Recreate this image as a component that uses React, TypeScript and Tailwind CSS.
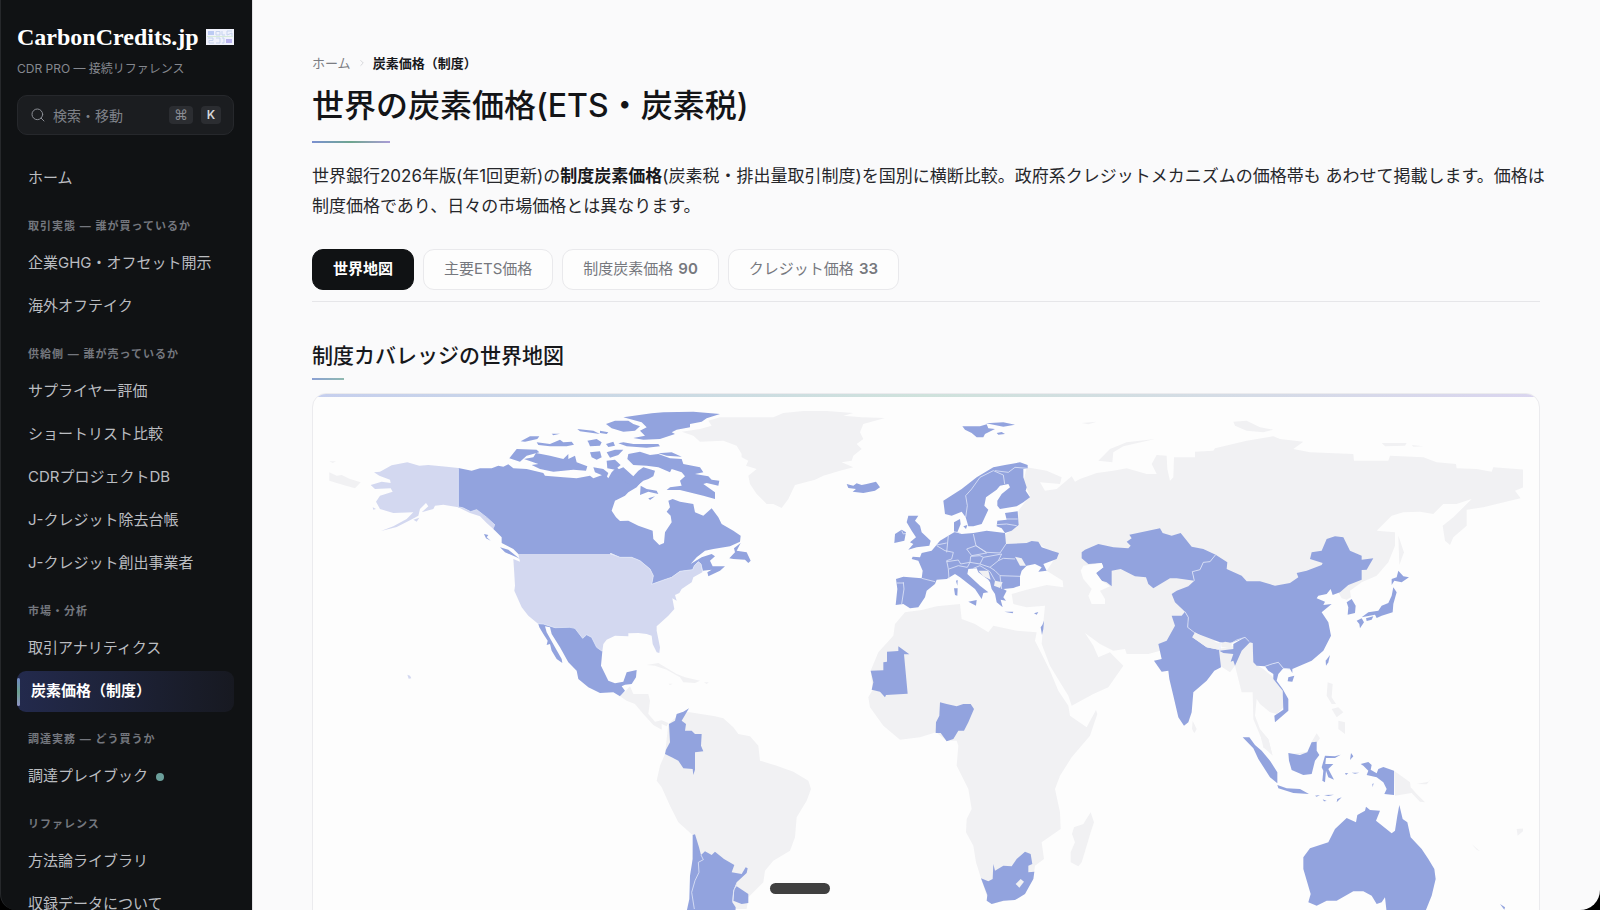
import { ChevronRight, Search } from 'lucide-react'

type NavItem = { label: string; active?: boolean; dot?: boolean }
type NavGroup = { title?: string; items: NavItem[] }

const NAV: NavGroup[] = [
  { items: [{ label: 'ホーム' }] },
  {
    title: '取引実態 — 誰が買っているか',
    items: [{ label: '企業GHG・オフセット開示' }, { label: '海外オフテイク' }],
  },
  {
    title: '供給側 — 誰が売っているか',
    items: [
      { label: 'サプライヤー評価' },
      { label: 'ショートリスト比較' },
      { label: 'CDRプロジェクトDB' },
      { label: 'J-クレジット除去台帳' },
      { label: 'J-クレジット創出事業者' },
    ],
  },
  {
    title: '市場・分析',
    items: [{ label: '取引アナリティクス' }, { label: '炭素価格（制度）', active: true }],
  },
  { title: '調達実務 — どう買うか', items: [{ label: '調達プレイブック', dot: true }] },
  {
    title: 'リファレンス',
    items: [{ label: '方法論ライブラリ' }, { label: '収録データについて' }],
  },
]

const TABS: { label: string; count?: number }[] = [
  { label: '世界地図' },
  { label: '主要ETS価格' },
  { label: '制度炭素価格', count: 90 },
  { label: 'クレジット価格', count: 33 },
]

// Map regions. Every region has its own origin and is drawn at a third of its size.
type Region = {
  x: number
  y: number
  none?: string[]
  partial?: string[]
  covered?: string[]
  enclaves?: string[]
  borders?: string
}

const REGIONS: Region[] = [
  // Eurasia base
  {
    x: 880,
    y: 390,
    none: [
      '440,235 500,245 545,265 540,285 480,280 495,305 530,300 575,262 585,278 600,270 650,252 700,245 740,238 800,255 830,255 815,225 830,198 860,200 862,240 870,275 880,265 882,205 945,205 945,188 1000,185 1005,178 1100,155 1180,142 1200,150 1270,158 1240,180 1290,190 1420,195 1422,215 1525,215 1530,200 1630,205 1670,220 1728,225 1730,238 1790,240 1835,248 1840,235 1932,242 1930,295 1905,305 1922,328 1890,335 1810,355 1760,362 1760,410 1720,445 1710,468 1695,455 1688,410 1720,385 1775,330 1730,345 1690,345 1660,375 1620,368 1570,370 1535,380 1490,425 1545,430 1545,470 1525,520 1490,560 1445,580 1410,605 1413,625 1400,632 1385,628 1370,600 1300,560 1000,760 860,780 805,795 740,795 735,780 700,785 660,765 615,732 640,770 655,805 690,790 700,800 730,830 685,895 640,915 575,950 565,920 540,880 510,830 485,765 490,700 495,650 440,655 400,645 395,615 440,602 500,588 550,595 548,575 500,545 530,500 470,460 380,470 370,440 415,410 415,365 450,320 430,280',
      '1115,760 1125,825 1150,840 1180,865 1205,900 1215,950 1190,975 1170,970 1140,945 1130,930 1125,980 1140,1020 1165,1050 1178,1100 1155,1075 1120,990 1118,910 1085,910 1065,830 1050,850 1020,830 1015,780',
      '655,215 690,180 740,160 825,150 730,172 700,190 697,220',
      '605,102 650,98 625,106',
      '1060,98 1100,95 1140,115 1180,122 1150,130 1100,125 1065,110',
      '1505,162 1580,162 1575,170 1515,172',
      '1595,168 1630,172 1600,173',
      '1555,440 1572,490 1558,528',
    ],
  },
  // Africa
  {
    x: 850,
    y: 600,
    none: [
      '175,38 215,33 260,22 330,15 335,60 375,75 415,100 430,80 500,95 560,100 555,125 575,165 600,215 625,275 655,320 660,350 710,385 738,333 742,345 720,410 665,475 630,530 615,570 630,640 632,690 575,730 582,780 555,800 550,840 510,895 425,915 410,890 393,838 378,790 370,740 348,700 350,660 365,630 355,570 320,500 325,440 320,425 290,425 258,400 210,415 150,422 100,380 60,325 55,295 68,272 62,215 85,160 130,110 135,75 165,40',
      '722,640 732,670 722,700 710,740 695,790 685,802 662,790 662,760 675,730 666,705 672,685 700,675',
    ],
    covered: [
      '145,142 178,166 162,166 173,284 108,288 105,295 90,278 65,272 70,250 62,215 100,214 100,190 111,188 111,158 145,156',
      '270,310 290,315 320,322 340,315 362,315 372,330 355,370 342,395 325,395 310,420 290,427 272,402 257,402 258,370 268,350',
      '430,795 435,815 460,800 485,802 500,780 525,758 542,765 547,795 535,800 535,820 553,818 550,840 525,885 495,903 460,905 425,915 410,905 412,888 393,838 415,847 428,840',
    ],
    enclaves: ['497,855 512,840 522,848 508,866'],
  },
  // North America, western half
  {
    x: 300,
    y: 320,
    none: ['88,460 110,470 125,468 150,480 182,490 165,508 130,498 88,485', '88,427 108,427 98,432'],
    partial: [
      '475,447 440,443 385,438 358,440 322,430 275,439 240,458 222,460 238,470 270,482 272,492 245,488 212,498 225,510 272,508 278,518 240,530 228,548 240,570 280,582 340,580 320,600 280,622 243,636 290,624 330,604 355,590 360,570 378,552 385,562 365,580 400,570 405,560 430,557 475,565 510,582 540,592 560,612 580,630 585,618 560,595 530,572 512,578 488,566 475,563',
      '340,602 358,596 350,608',
      '218,565 228,570 220,572',
      '322,1067 330,1070 334,1078 326,1079',
    ],
    covered: [
      '475,447 515,455 540,448 575,448 595,440 610,443 625,436 640,448 680,450 730,462 735,470 790,475 830,478 870,470 880,478 915,465 925,478 935,460 950,445 970,462 1000,475 1025,487 1010,505 985,520 975,530 945,545 935,575 948,595 960,606 985,605 1015,620 1058,635 1060,660 1078,678 1092,672 1095,640 1115,610 1112,590 1100,578 1110,565 1105,545 1118,540 1140,548 1180,555 1185,580 1210,590 1235,568 1255,595 1265,615 1300,635 1322,650 1320,668 1290,682 1240,690 1215,695 1190,715 1172,735 1205,715 1235,705 1245,712 1230,725 1238,742 1275,742 1260,755 1225,772 1222,760 1235,752 1208,755 1203,735 1195,728 1183,740 1178,752 1140,757 1115,775 1085,785 1055,796 1060,770 1050,750 1020,725 995,715 960,715 932,702 930,705 655,705 640,690 605,672 605,655 590,640 580,630 585,618 565,600 530,572 512,578 488,566 475,565',
      '552,645 565,648 560,655 572,665 558,658',
    ],
    borders: 'M475 448V564L488 566L512 578L530 572L560 595L585 618',
  },
  // North America, eastern half
  {
    x: 500,
    y: 390,
    none: [
      '545,128 600,120 635,110 625,95 660,85 820,85 850,72 940,63 1060,72 1030,80 1085,85 1155,87 1090,105 1080,130 1090,150 1070,165 1085,180 1060,200 1055,215 1025,220 1060,235 1020,245 970,260 945,272 885,288 865,330 845,357 820,345 800,345 770,315 750,285 745,260 770,240 738,230 745,215 725,205 725,195 710,170 670,155 600,158 580,140',
    ],
    partial: [
      '55,495 330,495 360,505 395,505 420,515 450,540 460,560 455,586 485,575 515,565 540,547 578,542 583,530 595,518 603,525 607,550 580,565 575,580 545,600 538,612 525,618 530,635 517,628 523,660 505,680 470,712 470,725 480,775 478,792 470,790 458,765 455,740 440,735 415,732 385,733 385,742 345,740 320,752 310,765 307,787 290,775 275,745 260,737 248,748 225,718 210,716 165,716 130,705 115,705 85,680 65,655 43,605 45,590 42,540 40,510 60,518',
    ],
    covered: [
      '115,705 130,705 165,716 210,714 225,718 248,748 260,737 275,745 290,775 307,787 303,830 325,875 345,883 370,878 380,850 410,843 408,865 395,885 375,887 365,892 375,905 360,922 340,910 300,912 265,895 235,870 230,845 205,820 180,775 155,735 150,715 135,712 140,730 165,775 185,810 187,822 170,810 155,785 150,765 140,768 143,755 130,735 118,715',
      '370,85 455,73 490,70 580,68 660,75 620,88 605,98 570,105 570,115 530,122 515,130 525,135 480,150 430,152 400,147 435,140 420,125 440,115 425,100',
      '318,105 345,95 385,95 400,105 420,112 405,125 370,128 335,118',
      '355,163 370,160 400,165 475,165 480,172 440,176 380,172',
      '232,120 280,125 300,135 240,127',
      '155,134 180,134 160,139',
      '300,125 325,130 320,135 300,132',
      '262,155 290,150 305,160 300,170 270,172 265,160',
      '318,165 340,158 345,170 325,174',
      '62,157 90,142 118,142 112,150 75,158',
      '110,160 150,165 180,152 190,160 215,158 222,167 200,172 150,172 115,168',
      '28,208 50,180 110,182 118,190 80,200 60,218',
      '72,210 100,205 108,192 150,200 190,210 205,195 205,210 225,200 230,220 262,232 258,245 220,242 160,248 120,240 95,228 115,225',
      '270,190 300,187 305,205 290,212 275,205',
      '320,190 345,182 370,182 355,198 330,206',
      '320,215 345,212 362,228 345,242 322,238',
      '280,235 310,240 325,252 320,265 285,250',
      '385,195 420,188 450,198 475,195 510,208 545,210 550,225 600,235 610,250 585,255 625,262 635,272 658,275 655,290 620,282 610,285 645,310 645,330 610,320 540,303 500,303 510,295 545,290 540,275 555,262 545,250 515,240 510,250 475,235 440,230 400,228 382,210',
      '345,245 370,235 400,262 415,245 430,235 465,245 460,262 445,270 430,275 412,290 385,285 350,260',
      '475,193 515,190 545,203 500,200',
      '422,290 440,300 470,305 475,315 445,308 420,318',
      '445,328 465,322 450,333',
      '722,462 710,485 740,490 752,515 745,522 735,512 700,510 688,508 705,490 702,478',
      '0,475 25,482 60,510 50,505 15,490',
      '1040,285 1060,290 1070,283 1085,288 1100,285 1128,278 1140,295 1125,305 1090,312 1058,308 1068,300 1045,297',
    ],
    borders:
      'M330 493L360 505L395 505L420 515L450 540L460 560L455 586L485 575L515 565L540 547L578 542L583 530L595 518L603 525L608 548M115 704L130 705L165 716L210 715L225 718L248 748L260 737L275 745L290 775L307 787',
  },
  // Central and South America
  {
    x: 600,
    y: 600,
    none: [
      '60,292 75,278 90,262 100,285 145,285 150,305 145,345 165,368 185,364 205,372 200,382 185,375 185,392 160,378 130,345 105,315 80,305',
      '140,198 175,192 230,225 255,235 300,245 285,252 250,250 240,235 200,212 165,200',
      '205,375 245,340 270,340 345,352 370,358 400,385 415,405 450,412 475,440 480,485 530,500 580,518 625,545 633,570 620,605 590,655 585,715 570,755 520,785 495,815 490,850 445,895 440,930 270,930 280,710 235,670 210,620 185,565 170,545 180,500 195,465',
      '205,254 218,254 210,258',
      '312,250 326,250 320,255',
    ],
    covered: [
      '267,328 245,365 258,375 255,395 275,395 285,405 305,405 303,440 310,457 285,460 285,512 280,528 278,510 250,508 235,485 215,475 195,465 198,452 210,430 207,375 225,365 230,345 250,338',
      '278,708 285,706 297,745 303,768 315,757 335,768 345,758 372,780 403,798 395,820 425,825 437,805 443,808 440,822 410,850 400,875 397,910 407,925 405,960 255,960 268,900 270,830 278,780',
      '410,862 445,885 445,912 425,915 400,905 403,870',
    ],
    borders: 'M303 768L310 782L295 790L297 820L285 845L275 880L283 930M410 855L401 875L398 908',
  },
  // Europe
  {
    x: 880,
    y: 390,
    covered: [
      '247,112 300,112 320,106 325,118 345,120 315,135 310,145 290,145 275,132 255,122',
      '318,103 370,100 405,107 370,113',
      '350,132 365,129 375,135 355,137',
      '420,220 443,228 443,238 430,240 430,265 440,295 437,305 450,325 430,340 410,352 360,360 352,350 352,335 365,315 390,295 385,285 360,290 350,302 318,325 313,350 325,362 305,405 280,412 265,412 257,385 245,368 215,380 195,375 190,335 245,300 290,265 340,235 375,228',
      '375,372 413,367 416,408 395,425 375,432 365,418 350,412 352,395 380,392',
      '85,380 115,380 105,395 120,410 125,430 152,455 148,470 110,475 85,482 100,465 90,460 108,445 95,425 80,400',
      '45,435 65,422 78,430 73,455 43,462',
      '222,400 240,390 242,405 232,430 222,428',
      '250,412 262,408 258,420',
      '98,503 120,505 125,492 155,485 180,455 205,440 225,428 245,435 280,432 320,425 375,432 378,465 440,462 455,456 475,458 485,475 515,485 537,492 530,510 490,525 500,545 475,548 485,535 465,525 440,530 425,545 420,562 420,590 400,597 370,600 380,605 370,625 378,635 362,632 368,655 350,640 345,615 335,600 330,580 325,572 295,550 290,538 265,540 262,555 300,590 325,610 310,612 305,630 285,600 240,565 225,555 200,570 170,572 165,585 140,605 135,625 115,655 90,658 70,645 47,648 52,600 48,570 70,563 125,568 128,545 115,515 95,510',
      '265,638 290,633 288,650',
      '222,598 233,598 232,620 225,618',
      '228,575 233,573 232,590',
      '373,668 400,668 398,673',
      '462,673 475,669 470,677',
      '487,708 492,695 490,720 486,738 482,715',
    ],
    enclaves: ['295,545 325,545 332,572 310,562', '345,575 368,580 360,597 342,590', '405,503 425,508 438,530 420,530'],
    borders:
      'M257 385L262 350L257 320L275 300L300 265L340 245L370 258L374 285M345 245L385 250L405 235L443 238M378 390H413M350 407L380 405L410 410M70 580L72 600L65 645M50 582L72 582M125 568L165 578M207 570L205 540L200 515L215 510L220 490L195 485L170 470M205 440L200 490M170 468L200 462M280 435L288 470L260 480L275 500L320 492L288 470M288 470L320 490L360 492L378 465M200 518L235 513L242 525L270 520L300 525L310 505L365 495L355 515L330 535L300 525M207 540L235 530L262 535L270 520L272 502L300 500L310 505M355 515L370 508L405 510M330 535L345 545L360 560L420 562M360 560L365 600M280 538L300 530L330 548M330 548L345 575M65 425L70 435L78 433M222 428L240 432',
  },
  // Asia
  {
    x: 1060,
    y: 500,
    none: [
      '398,665 410,690 403,703 396,690',
      '803,550 818,555 815,595 828,615 815,615 800,590',
      '835,665 855,670 855,705 835,690',
      '815,630 835,625 850,640 830,655',
    ],
    covered: [
      '65,160 75,152 115,135 160,145 205,148 212,140 200,128 215,118 208,107 300,88 308,102 335,110 362,102 395,143 430,150 467,167 450,188 430,190 420,212 397,218 403,245 350,238 330,238 280,268 265,255 258,235 225,232 182,210 155,215 155,262 140,250 125,245 108,222 130,205 125,192 85,195 65,178',
      '467,167 502,190 500,210 545,230 560,247 600,247 645,260 690,252 715,235 710,222 740,215 785,198 788,192 750,180 755,160 785,155 800,120 825,112 850,115 870,155 905,170 905,182 940,178 920,212 905,213 905,242 865,258 840,280 818,288 812,270 800,285 775,290 770,298 795,308 790,318 815,315 785,340 805,370 813,410 790,455 755,485 720,500 697,510 697,522 690,510 670,508 655,490 615,502 590,500 580,490 578,432 568,430 555,415 530,425 510,432 480,430 440,415 400,400 383,385 385,355 375,338 345,310 335,285 350,275 385,262 403,245 397,218 420,212 430,190 450,188',
      '375,338 385,355 383,385 405,402 397,415 440,445 477,452 483,505 463,515 440,545 400,580 395,640 385,670 372,680 355,655 340,590 328,540 325,515 305,518 282,485 305,480 295,435 320,425 345,380 335,350 365,350',
      '478,455 520,450 520,435 555,415 570,430 545,455 525,500 520,485 512,488 520,465 490,462',
      '615,502 655,490 670,508 655,525 650,545 668,570 685,600 685,635 645,670 643,650 670,632 668,575 640,540 640,525 625,515',
      '860,310 875,300 887,320 885,342 863,347 865,325',
      '1000,265 1010,280 1000,315 998,340 965,350 950,357 945,347 905,355 925,340 955,335 965,320 985,312 995,290',
      '1015,215 1030,232 1047,235 1025,250 1003,245 995,258 995,240 1010,235',
      '890,365 905,358 912,370 900,388 898,375',
      '918,358 940,352 935,362 920,366',
      '810,468 805,490 798,500 797,485',
      '685,535 703,530 697,548 683,547',
    ],
    enclaves: ['397,415 405,400 440,420 478,433 476,452 440,445', '483,434 495,428 515,432 515,445 485,445'],
    borders:
      'M467 167L450 188L430 190L420 212L397 218L403 245M375 338L385 355L383 385L405 402M515 432L530 423L555 415L568 428M480 430V455M615 502L635 495L655 490L670 508L690 510',
  },
  // South-East Asia and Oceania
  {
    x: 1220,
    y: 640,
    none: [
      '118,275 145,300 157,348 130,325',
      '215,345 262,338 275,308 290,283 300,298 290,312 265,345',
      '522,395 570,430 572,445 590,465 615,490 600,488 575,462 525,470',
      '590,435 625,428 635,418 620,436',
      '755,615 780,637 770,632',
      '890,570 920,568 893,590',
    ],
    covered: [
      '68,295 88,295 105,318 125,335 150,365 172,400 172,433 150,415 115,360 100,328',
      '172,438 200,448 240,450 267,465 220,462 175,448',
      '205,342 240,348 262,340 275,310 290,308 290,335 298,348 285,365 275,405 250,408 215,393 207,365',
      '315,350 345,352 362,347 345,357 318,357 316,375 340,375 325,390 342,422 325,415 318,395 315,430 307,425 310,395 305,385',
      '393,342 400,352 390,363',
      '375,402 385,403 378,408',
      '395,401 418,401 405,404',
      '457,435 461,433 458,444',
      '285,470 300,468 290,473',
      '312,468 342,467 325,471',
      '365,475 350,490 352,480',
      '308,481 320,486 312,487',
      '422,375 445,369 455,378 452,392 470,403 475,390 490,384 522,395 522,468 493,465 500,450 490,430 470,415 440,408 445,395 430,380',
      '538,498 548,540 562,550 572,595 605,630 625,660 643,690 647,720 635,770 615,820 500,820 495,775 485,790 470,795 455,770 430,757 400,757 350,785 320,785 290,800 265,790 272,765 250,690 250,655 270,628 325,610 345,570 380,537 408,550 412,528 435,515 438,503 450,513 480,515 468,545 515,583 525,575 532,530',
      '840,795 855,805 853,812',
    ],
  },
]

const CASPIAN =
  '70,200 125,192 130,205 108,222 125,245 150,262 120,275 135,300 135,315 95,315 85,290 95,270 70,240 62,215'

function RegionShapes({ region }: { region: Region }) {
  return (
    <g transform={`translate(${region.x} ${region.y}) scale(0.33333)`} strokeLinejoin="round">
      {region.none?.map((p) => (
        <polygon key={p} points={p} fill="#f1f1f3" />
      ))}
      {region.partial?.map((p) => (
        <polygon key={p} points={p} fill="#d3d8f0" />
      ))}
      {region.covered?.map((p) => (
        <polygon key={p} points={p} fill="#92a3de" />
      ))}
      {region.enclaves?.map((p) => (
        <polygon key={p} points={p} fill="#f1f1f3" />
      ))}
      {region.borders && <path d={region.borders} fill="none" stroke="#dfe5f7" strokeWidth="2.500" />}
    </g>
  )
}

function WorldMap() {
  return (
    <svg viewBox="329 412 1194 600" className="block w-full" role="img" aria-label="制度カバレッジの世界地図">
      {REGIONS.map((region, i) => (
        <RegionShapes key={i} region={region} />
      ))}
      <g transform="translate(1060 500) scale(0.33333)">
        <polygon points={CASPIAN} fill="#fdfdfd" />
      </g>
    </svg>
  )
}

function LogoMark() {
  return (
    <svg viewBox="0 0 28 16" className="h-4 w-7 shrink-0" aria-hidden="true">
      <rect width="28" height="16" fill="#f0f2fc" />
      <path d="M2 2h6v4H2z" fill="#bccbf3" />
      <path d="M20 10h6v4h-6z" fill="#b9b4ee" />
      <path
        d="M10 2.500h4v3.500h-4zM16 2v4h3M21 2h5M21 2v4l5-2v3M2 9h5v2.500H3V14h5M10 9h4v5h-4M16 9h2v5h-2"
        fill="none"
        stroke="#c5d3ee"
      />
      <path d="M1 7.500h26" stroke="#d5ead9" />
    </svg>
  )
}

function Sidebar() {
  return (
    <aside className="flex w-[252px] shrink-0 flex-col overflow-hidden rounded-bl-2xl border-l border-[#26282b] bg-[#101214] pl-4 pr-[18px] pt-[21px]">
      <div className="flex items-center justify-between">
        <a
          href="#"
          className="whitespace-nowrap font-['Liberation_Serif',serif] text-[24px] font-bold leading-8 text-white"
        >
          CarbonCredits.jp
        </a>
        <LogoMark />
      </div>
      <p className="mt-2 text-[12px] leading-4 text-[#85888f]">CDR PRO — 接続リファレンス</p>

      <div className="mt-[18px] flex h-10 shrink-0 items-center rounded-[10px] border border-[#26282c] bg-[#1b1d20] px-3">
        <Search className="h-4 w-4 shrink-0 text-[#8b8e95]" strokeWidth={1.5} aria-hidden="true" />
        <input
          type="text"
          aria-label="検索・移動"
          placeholder="検索・移動"
          className="ml-[7px] w-0 flex-1 bg-transparent text-[14px] text-white outline-none placeholder:text-[#7f8289]"
        />
        <kbd className="flex h-[18px] w-6 items-center justify-center rounded bg-[#2b2d31] font-['DejaVu_Sans',sans-serif] text-[14px] text-[#8b8e95]">
          ⌘
        </kbd>
        <kbd className="ml-2 flex h-[18px] w-5 items-center justify-center rounded bg-[#2b2d31] font-[inherit] text-[12px] font-semibold text-[#d5d6d9]">
          K
        </kbd>
      </div>

      <nav className="mt-[23px]">
        {NAV.map((group, i) => (
          <div key={i}>
            {group.title && (
              <h3 className="h-[42px] pl-[11px] pt-4 text-[11px] font-semibold leading-[18px] tracking-[1px] text-[#74777e]">
                {group.title}
              </h3>
            )}
            {group.items.map((item) => (
              <a
                key={item.label}
                href="#"
                aria-current={item.active ? 'page' : undefined}
                className={`mb-[2px] flex h-[41px] items-center whitespace-nowrap rounded-[9px] text-[15px] ${
                  item.active
                    ? 'bg-gradient-to-r from-[#232a4d] to-[#171921] font-semibold text-white'
                    : 'pl-[11px] text-[#bbbdc1]'
                }`}
              >
                {item.active && (
                  <span className="mr-[11px] h-7 w-[3px] rounded-sm bg-gradient-to-b from-[#7187c4] via-[#6ba08f] to-[#8f92c4]" />
                )}
                {item.label}
                {item.dot && <span className="ml-2 h-2 w-2 rounded-full bg-[#6b9f9b]" />}
              </a>
            ))}
          </div>
        ))}
      </nav>
    </aside>
  )
}

export default function App() {
  return (
    <div className="relative flex h-screen overflow-hidden bg-black font-[Inter,'Noto_Sans_CJK_JP',sans-serif]" lang="ja">
      <Sidebar />

      <main className="min-w-0 flex-1 overflow-hidden rounded-br-[20px] border-l border-[#e2e2e5] bg-[#fafafb] pl-[59px] pr-[60px] pt-[54px]">
        <nav aria-label="パンくず" className="flex items-center gap-[6px] text-[13px] leading-[18px]">
          <a href="#" className="text-[#7b7d83]">
            ホーム
          </a>
          <ChevronRight className="h-[10px] w-[10px] text-[#cfd0d4]" aria-hidden="true" />
          <span className="font-semibold text-[#17181b]">炭素価格（制度）</span>
        </nav>

        <h1 className="mt-[9px] text-[32px] font-medium leading-[50px] text-[#131417]">世界の炭素価格(ETS・炭素税)</h1>
        <div className="mt-[10px] h-[2px] w-[78px] bg-gradient-to-r from-[#7b8fd0] via-[#6ea58f] to-[#a99bd6]" />

        <p className="-mr-3 mt-[18px] text-[17px] leading-[30px] text-[#26272b]">
          世界銀行2026年版(年1回更新)の<strong className="font-bold text-[#17181b]">制度炭素価格</strong>
          (炭素税・排出量取引制度)を国別に横断比較。政府系クレジットメカニズムの価格帯も
          あわせて掲載します。価格は制度価格であり、日々の市場価格とは異なります。
        </p>

        <div role="tablist" className="mt-7 flex gap-[9px] border-b border-[#e6e6e9] pb-[11px]">
          {TABS.map((tab, i) => (
            <button
              key={tab.label}
              type="button"
              role="tab"
              aria-selected={i === 0}
              className={`h-[41px] whitespace-nowrap rounded-[11px] border px-5 text-[15px] ${
                i === 0
                  ? 'border-[#101214] bg-[#101214] font-semibold text-white'
                  : 'border-[#e9e9ec] bg-[#fdfdfd] text-[#76787e]'
              }`}
            >
              {tab.label}
              {tab.count && <span className="ml-[5px] font-semibold">{tab.count}</span>}
            </button>
          ))}
        </div>

        <h2 className="mt-[38px] text-[21px] font-medium leading-8 text-[#17181b]">制度カバレッジの世界地図</h2>
        <div className="mt-[6px] h-[2px] w-8 bg-gradient-to-r from-[#8ba0d4] to-[#8fb9b0]" />

        <section className="mt-[13px] overflow-hidden rounded-[14px] border border-[#ebebee] bg-[#fdfdfd]">
          <div className="h-[3px] bg-gradient-to-r from-[#c6cfee] via-[#cfe2dc] to-[#dad5ef]" />
          <div className="px-4 pb-4 pt-[14px]">
            <WorldMap />
          </div>
        </section>
      </main>

      <div className="absolute bottom-4 left-1/2 h-[11px] w-[60px] -translate-x-1/2 rounded-full bg-[#404040]" />
    </div>
  )
}
